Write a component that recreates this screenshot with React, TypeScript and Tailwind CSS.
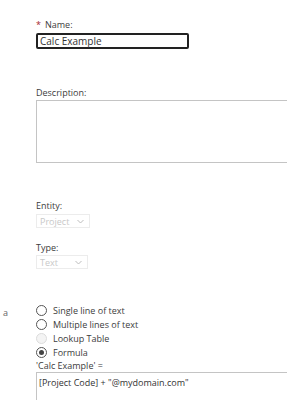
import React from "react";

const radios = [
  { label: "Single line of text", checked: false, disabled: false },
  { label: "Multiple lines of text", checked: false, disabled: false },
  { label: "Lookup Table", checked: false, disabled: true },
  { label: "Formula", checked: true, disabled: false },
];

function Radio({ checked, disabled }: { checked: boolean; disabled: boolean }) {
  return (
    <span
      className={`flex h-[11px] w-[11px] items-center justify-center rounded-full border ${
        disabled ? "border-[#dcdcdc] bg-[#f4f4f4]" : "border-[#555]"
      }`}
    >
      {checked && <span className="h-[5px] w-[5px] rounded-full bg-[#444]" />}
    </span>
  );
}

function Select({ value, width }: { value: string; width: string }) {
  return (
    <div
      className={`flex h-[14px] items-center justify-between border border-[#ececec] pl-[3px] pr-[5px] text-[#c8c8c8] ${width}`}
    >
      <span>{value}</span>
      <svg width="7" height="5" viewBox="0 0 7 5" fill="none">
        <path d="M0.5 1 L3.5 4 L6.5 1" stroke="#bdbdbd" strokeWidth="1" />
      </svg>
    </div>
  );
}

export default function App() {
  return (
    <div className="h-[400px] w-[287px] overflow-hidden bg-white font-['Open_Sans',sans-serif] text-[9px] leading-[13px] text-[#3c3c3c]">
      <div className="pl-[36px] pt-[18px]">
        <p className="flex gap-[4px]">
          <span className="text-[#a4262c]">*</span>
          <span>Name:</span>
        </p>
        <div className="mt-[2px] flex h-[16px] w-[153px] items-center rounded-[2px] border-2 border-[#222] pl-[2px] text-[10px] text-[#333]">
          Calc Example
        </div>

        <p className="mt-[37px]">Description:</p>
        <div className="mt-[1px] h-[63px] w-[260px] border border-[#c4c4c4]" />

        <p className="mt-[36px]">Entity:</p>
        <div className="mt-[2px]">
          <Select value="Project" width="w-[54px]" />
        </div>

        <p className="mt-[13px]">Type:</p>
        <div className="mt-[1px]">
          <Select value="Text" width="w-[52px]" />
        </div>
      </div>

      <div className="mt-[35px] grid grid-cols-[36px_1fr]">
        <span className="pl-[3px] pt-[2px] text-[#666]">a</span>
        <div>
          <div className="flex flex-col gap-[1px]">
            {radios.map((r) => (
              <div key={r.label} className="flex items-center gap-[6px]">
                <Radio checked={r.checked} disabled={r.disabled} />
                <span>{r.label}</span>
              </div>
            ))}
          </div>
          <p>'Calc Example' =</p>
          <div className="h-[40px] w-[260px] border border-[#c4c4c4] pl-[2px] pt-[3px] text-[#333]">
            [Project Code] + "@mydomain.com"
          </div>
        </div>
      </div>
    </div>
  );
}
